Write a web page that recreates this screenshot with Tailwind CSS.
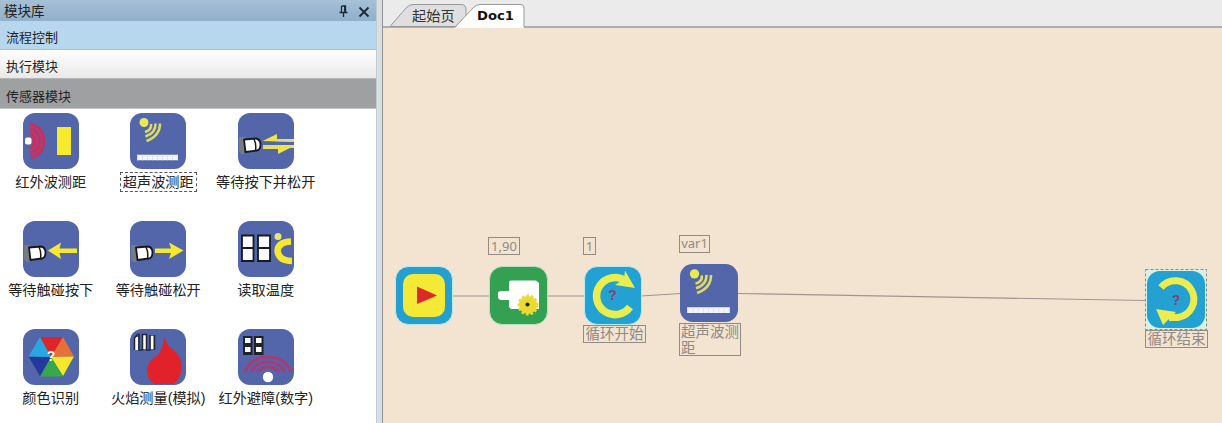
<!DOCTYPE html>
<html lang="zh-CN">
<head>
  <meta charset="UTF-8" />
  <title>模块库</title>
  <script src="https://cdn.jsdelivr.net/npm/@tailwindcss/browser@4"></script>
</head>

<body class="w-[1222px] h-[423px] overflow-hidden bg-white text-[#222] font-['Liberation_Sans','Noto_Sans_CJK_SC',sans-serif]">

  <!-- Shared icon symbols -->
  <svg class="hidden">
    <symbol id="ultrasonic" viewBox="0 0 56 56">
      <rect width="56" height="56" rx="12" fill="#5266a9" />
      <circle cx="14" cy="9.500" r="4.500" fill="#e9e85a" />
      <g fill="none" stroke="#dedb63" stroke-width="2.500">
        <path d="M21 11Q22 17 15 19" />
        <path d="M25.500 10.500Q26 20 15.500 23.500" />
        <path d="M30 10.500Q30 23 16.500 28" />
      </g>
      <path d="M7 44.500H48" stroke="#f4f6ff" stroke-width="5.500" />
      <path d="M7 44.500H48" stroke="#dde1f2" stroke-width="5.500" stroke-dasharray="1 4" />
    </symbol>
    <symbol id="bumper" viewBox="0 0 56 56">
      <rect width="56" height="56" rx="12" fill="#5266a9" />
      <path d="M1 24H8L6 41H3L1 38Z" fill="#777b83" />
      <path d="M6 26.500L18 25.500Q22 26 22.500 31Q22.500 37 19 37.500L7.500 39Z" fill="#fff" stroke="#17181d" stroke-width="1.800" stroke-linejoin="round" />
      <path d="M16 26Q18.500 31 17.500 37.500" fill="none" stroke="#17181d" stroke-width="1.500" />
    </symbol>
  </svg>

  <div class="flex h-full">
    <!-- Module library -->
    <aside class="w-[376px] shrink-0 bg-white">
      <div class="h-[21px] flex items-center pl-1 pr-[6px] pt-[2px] bg-linear-to-b from-[#a6c0d6] to-[#91b0ca] text-[13.500px] leading-none">
        <span class="grow">模块库</span>
        <svg class="w-[9px] h-[13px] mr-[10px]" viewBox="0 0 9 13" fill="none" stroke="#1c2838" stroke-width="1.300">
          <path d="M2.500 1H6.500V7M2.500 1V7M5.700 1V7M.500 7.500H8.500M4.500 7.500V12" />
        </svg>
        <svg class="w-[12px] h-[12px]" viewBox="0 0 12 12" stroke="#1c2838" stroke-width="1.800">
          <path d="M1.500 1.500L10.500 10.500M10.500 1.500L1.500 10.500" />
        </svg>
      </div>
      <div class="h-[29px] flex items-center pl-[6px] pt-[4px] bg-[#b7d7ef] border-b border-[#abc0d2] text-[13px] leading-none">流程控制</div>
      <div class="h-[29px] flex items-center pl-[6px] pt-[4px] bg-linear-to-b from-white to-[#e9e9e9] border-b border-[#b5b5b5] text-[13px] leading-none">执行模块</div>
      <div class="h-[30px] flex items-center pl-[6px] pt-[5px] bg-[#9fa0a2] border-b border-[#c6c6c6] text-[13px] leading-none">传感器模块</div>

      <div class="grid grid-cols-[107.500px_107.500px_107.500px] auto-rows-[108px] -ml-[3px] pt-[4px] text-[14.200px] leading-[18px] whitespace-nowrap">
        <div class="flex flex-col items-center">
          <svg class="size-14" viewBox="0 0 56 56">
            <rect width="56" height="56" rx="12" fill="#5266a9" />
            <path d="M7 9Q22 14 22 28Q22 41 8 47Z" fill="#a34379" />
            <g fill="none" stroke="#d3295b" stroke-width="2">
              <path d="M7 21Q12 22 12 28Q12 34 7 35" />
              <path d="M7 16Q16.500 18 16.500 28Q16.500 38 7 40" />
              <path d="M8 11Q21 15 21 28Q21 41 8 45" />
            </g>
            <rect x="2" y="24.500" width="6.500" height="7" rx="2" fill="#fff" />
            <rect x="34" y="14" width="14" height="28" fill="#f5ea2b" />
          </svg>
          <span class="mt-[4px]">红外波测距</span>
        </div>
        <div class="flex flex-col items-center">
          <svg class="size-14"><use href="#ultrasonic" /></svg>
          <span class="mt-[3px] px-[2px] border border-dashed border-[#555]">超声波测距</span>
        </div>
        <div class="flex flex-col items-center">
          <svg class="size-14" viewBox="0 0 56 56">
            <use href="#bumper" />
            <path d="M24.500 28L39 21V26H56V29ZM56 32V35H52L40 41V36H25V32Z" fill="#eee444" />
            <path d="M38 27.500H56M25 33.500H40" stroke="#dcd783" stroke-width="1.500" />
          </svg>
          <span class="mt-[4px]">等待按下并松开</span>
        </div>

        <div class="flex flex-col items-center">
          <svg class="size-14" viewBox="0 0 56 56">
            <use href="#bumper" />
            <path d="M25 29.500L38 21.500L36.500 27.500H54V32H36.500L38 38Z" fill="#f5e82f" />
          </svg>
          <span class="mt-[4px]">等待触碰按下</span>
        </div>
        <div class="flex flex-col items-center">
          <svg class="size-14" viewBox="0 0 56 56">
            <use href="#bumper" />
            <path d="M53.500 29.500L39 21.500L41 27.500H25V32H41L39 38Z" fill="#f5e82f" />
          </svg>
          <span class="mt-[4px]">等待触碰松开</span>
        </div>
        <div class="flex flex-col items-center">
          <svg class="size-14" viewBox="0 0 56 56">
            <rect width="56" height="56" rx="12" fill="#5266a9" />
            <g fill="#fff" stroke="#171a25" stroke-width="1.800">
              <path d="M4 14.500H15.500V40H4ZM20 14.500H32V40H20ZM4 27H15.500M20 27H32" />
            </g>
            <circle cx="40" cy="15.500" r="3.500" fill="#e8e570" />
            <path d="M53 20.500Q40 21 39.500 30Q41 40 54 40" fill="none" stroke="#f5e82f" stroke-width="6.500" />
          </svg>
          <span class="mt-[4px]">读取温度</span>
        </div>

        <div class="flex flex-col items-center">
          <svg class="size-14" viewBox="0 0 56 56">
            <rect width="56" height="56" rx="12" fill="#5266a9" />
            <path d="M28 28L17 8H40Z" fill="#df2429" />
            <path d="M28 28L40 8L51 27.500Z" fill="#e87036" />
            <path d="M28 28L51 27.500L40 47Z" fill="#f4e82d" />
            <path d="M28 28L40 47.500H17Z" fill="#36a94a" />
            <path d="M28 28L17 47L5.500 27.500Z" fill="#233a9c" />
            <path d="M28 28L5.500 27.500L17 8Z" fill="#29a6e0" />
            <text x="28" y="32" text-anchor="middle" font-size="14" font-weight="bold" fill="#fff">?</text>
          </svg>
          <span class="mt-[4px]">颜色识别</span>
        </div>
        <div class="flex flex-col items-center">
          <svg class="size-14" viewBox="0 0 56 56">
            <rect width="56" height="56" rx="12" fill="#5266a9" />
            <path d="M34 8Q37 17 44 21Q52 28 51.500 39Q51 49 44 55H24Q16 49 17 39Q19 31 28 26Q33 20 34 8Z" fill="#e1222a" />
            <path d="M6.500 21V8M14.500 20V6M22 20V7" stroke="#fff" stroke-width="3" />
            <path d="M4.500 21V9L7.500 5.500H9V21H12.500V5.500H16.500V21H20V6M24.500 6V21" fill="none" stroke="#252833" stroke-width="1.500" />
          </svg>
          <span class="mt-[4px]">火焰测量(模拟)</span>
        </div>
        <div class="flex flex-col items-center">
          <svg class="size-14" viewBox="0 0 56 56">
            <rect width="56" height="56" rx="12" fill="#5266a9" />
            <path d="M5 7H14.500V26H5ZM16 7H25.500V26H16Z" fill="#20232d" />
            <path d="M7 9H12.500V14H7ZM18 9H23.500V14H18ZM7 18H12.500V23H7ZM18 18H23.500V23H18Z" fill="#fff" />
            <g fill="none" stroke="#b4356f" stroke-width="2.600">
              <path d="M7 43Q13 28 30 28Q47 28 53 43" />
              <path d="M13 43Q18 33 30 33Q42 33 47 43" />
              <path d="M19 43Q23 38 30 38Q37 38 41 43" />
            </g>
            <circle cx="30" cy="48" r="5.200" fill="#fff" />
          </svg>
          <span class="mt-[4px]">红外避障(数字)</span>
        </div>
      </div>
    </aside>

    <!-- Splitter -->
    <div class="w-[7px] shrink-0 bg-[#d9dee1] border-l border-r border-l-[#bccbd6] border-r-[#929292]"></div>

    <!-- Document area -->
    <main class="grow flex flex-col">
      <div class="h-[28px] shrink-0 bg-[#ebebeb]">
        <svg class="w-full h-full" viewBox="0 0 839 28">
          <path d="M0 27H839" stroke="#999" stroke-width="1.500" />
          <path d="M7 26.500L23 8Q26 4.500 30 4.500H79Q83 5 83 10V26.500Z" fill="#dedfde" stroke="#999" />
          <path d="M72 28L90 8Q93 4.500 97 4.500H138Q141 4.500 141 8V28Z" fill="#fff" />
          <path d="M72 27L90 8Q93 4.500 97 4.500H138Q141 4.500 141 8V27" fill="none" stroke="#999" />
          <text x="29" y="20.500" font-size="14.200" fill="#333">起始页</text>
          <text x="94" y="20" font-size="13" font-weight="bold" fill="#111" textLength="37" lengthAdjust="spacingAndGlyphs" class="font-['DejaVu_Sans',sans-serif]">Doc1</text>
        </svg>
      </div>

      <!-- Flow canvas, nodes are placed freely -->
      <div class="grow relative bg-[#f3e4d1] text-[#908a86]">
        <svg class="absolute inset-0 w-full h-full" viewBox="0 0 839 395" fill="none" stroke="#a1938f" stroke-width="1.200">
          <path d="M70 268H107M164 268H202M258 268L298 265.500M355 265.500L764 272.500" />
        </svg>

        <!-- Start -->
        <svg class="absolute left-[12px] top-[238px] w-[58px] h-[59px]" viewBox="0 0 58 59">
          <rect x=".5" y=".5" width="57" height="58" rx="13" fill="#249fd0" stroke="#bdeaf0" />
          <rect x="8" y="8" width="42" height="43" rx="10" fill="#f3e936" />
          <path d="M22 20.500L42 29.500L22 38Z" fill="#dd2927" />
        </svg>

        <!-- Motor -->
        <div class="absolute left-[105px] top-[209px] w-[32px] h-[18px] border border-[#938a83] text-[13px] leading-[16px] text-center font-['Noto_Sans',sans-serif]">1,90</div>
        <svg class="absolute left-[106px] top-[238px] w-[59px] h-[59px]" viewBox="0 0 59 59">
          <rect x=".5" y=".5" width="58" height="58" rx="13" fill="#34a052" stroke="#b9e1bd" />
          <path d="M20 16Q20 14.500 22 14.500H47L50 17V43H22L20 41V34H13Q9 34 9 31V27Q9 25 13 25H20Z" fill="#fff" />
          <circle cx="39" cy="39" r="9" fill="#eadb30" stroke="#eadb30" stroke-width="3" stroke-dasharray="2.500 2" />
          <circle cx="38.500" cy="38.500" r="2" fill="#26220f" />
        </svg>

        <!-- Loop start -->
        <div class="absolute left-[200px] top-[209px] w-[13px] h-[18px] border border-[#938a83] text-[13px] leading-[16px] text-center font-['Noto_Sans',sans-serif]">1</div>
        <svg class="absolute left-[201px] top-[238px] w-[58px] h-[59px]" viewBox="0 0 58 59">
          <rect x=".5" y=".5" width="57" height="58" rx="13" fill="#22a1d2" stroke="#bdeaf0" />
          <path d="M41 14.500A18.500 18.500 0 1 0 46 41" fill="none" stroke="#e9ed50" stroke-width="7.500" />
          <path d="M41 4.500L51 22L31 19L40 13Z" fill="#e9ed50" />
          <text x="28.500" y="34" text-anchor="middle" font-size="14" font-weight="bold" fill="#8f3f6c">?</text>
        </svg>
        <div class="absolute left-[200px] top-[297px] w-[63px] h-[18px] border border-[#938a83] text-[14.500px] leading-[16px] text-center whitespace-nowrap">循环开始</div>

        <!-- Ultrasonic -->
        <div class="absolute left-[296px] top-[207px] w-[31px] h-[18px] border border-[#938a83] text-[13px] leading-[15px] text-center font-['Noto_Sans',sans-serif]">var1</div>
        <svg class="absolute left-[297px] top-[236px] w-[58px] h-[58px]"><use href="#ultrasonic" /></svg>
        <div class="absolute left-[296px] top-[295px] w-[62px] h-[33px] border border-[#938a83] text-[14.500px] leading-[16px] pl-px">超声波测距</div>

        <!-- Loop end, selected -->
        <svg class="absolute left-[762px] top-[241px] w-[62px] h-[61px]" viewBox="0 0 62 61">
          <rect x=".5" y=".5" width="61" height="60" fill="#d8f1e4" stroke="#7f927b" stroke-dasharray="3 2" />
          <rect x="2" y="2" width="58" height="57" rx="13" fill="#22a1d2" />
          <path d="M16 18.500A18.500 18.500 0 1 1 33 48.500H24" fill="none" stroke="#e9ed50" stroke-width="7" />
          <path d="M11 40L31 43L25 49L18 56Z" fill="#e9ed50" />
          <text x="31" y="35.500" text-anchor="middle" font-size="14" font-weight="bold" fill="#8f3f6c">?</text>
        </svg>
        <div class="absolute left-[762px] top-[302px] w-[63px] h-[18px] border border-[#938a83] text-[14.500px] leading-[16px] text-center whitespace-nowrap">循环结束</div>
      </div>
    </main>
  </div>
</body>
</html>
